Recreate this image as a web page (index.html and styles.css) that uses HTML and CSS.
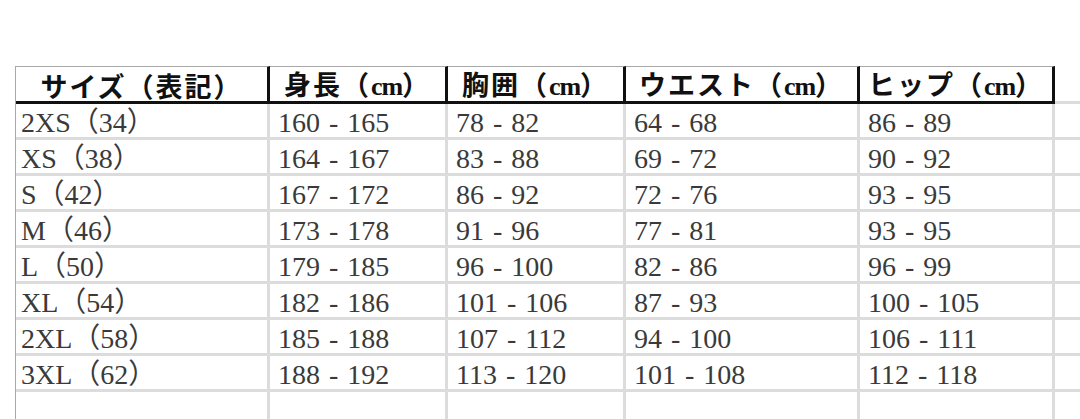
FILE: index.html
```html
<!DOCTYPE html>
<html lang="ja">
<head>
<meta charset="utf-8">
<title>サイズ表</title>
<link rel="stylesheet" href="styles.css">
</head>
<body>
<table class="sheet">
  <colgroup>
    <col class="c1"><col class="c2"><col class="c3"><col class="c4"><col class="c5"><col class="c6">
  </colgroup>
  <thead>
    <tr>
      <th>サイズ（表記）</th>
      <th>身長（<span class="unit">cm</span>）</th>
      <th>胸囲（<span class="unit">cm</span>）</th>
      <th>ウエスト（<span class="unit">cm</span>）</th>
      <th>ヒップ（<span class="unit">cm</span>）</th>
      <th class="blank"></th>
    </tr>
  </thead>
  <tbody>
    <tr><td>2XS（34）</td><td>160 - 165</td><td>78 - 82</td><td>64 - 68</td><td>86 - 89</td><td></td></tr>
    <tr><td>XS（38）</td><td>164 - 167</td><td>83 - 88</td><td>69 - 72</td><td>90 - 92</td><td></td></tr>
    <tr><td>S（42）</td><td>167 - 172</td><td>86 - 92</td><td>72 - 76</td><td>93 - 95</td><td></td></tr>
    <tr><td>M（46）</td><td>173 - 178</td><td>91 - 96</td><td>77 - 81</td><td>93 - 95</td><td></td></tr>
    <tr><td>L（50）</td><td>179 - 185</td><td>96 - 100</td><td>82 - 86</td><td>96 - 99</td><td></td></tr>
    <tr><td>XL（54）</td><td>182 - 186</td><td>101 - 106</td><td>87 - 93</td><td>100 - 105</td><td></td></tr>
    <tr><td>2XL（58）</td><td>185 - 188</td><td>107 - 112</td><td>94 - 100</td><td>106 - 111</td><td></td></tr>
    <tr><td>3XL（62）</td><td>188 - 192</td><td>113 - 120</td><td>101 - 108</td><td>112 - 118</td><td></td></tr>
    <tr class="empty"><td></td><td></td><td></td><td></td><td></td><td></td></tr>
  </tbody>
</table>
</body>
</html>
```

FILE: styles.css
```css
html, body {
  margin: 0;
  padding: 0;
  background: #ffffff;
  overflow: hidden;
}

body {
  padding: 66px 0 0 15px;
  width: 1200px;
}

.sheet {
  border-collapse: separate;
  border-spacing: 0;
  table-layout: fixed;
  width: 1084px;
  border-left: 1px solid #a8a8a8;
  font-family: "Liberation Serif", "Noto Sans CJK JP", serif;
}

.c1 { width: 254px; }
.c2 { width: 178px; }
.c3 { width: 178px; }
.c4 { width: 234px; }
.c5 { width: 195px; }
.c6 { width: 45px; }

.sheet th {
  box-sizing: border-box;
  height: 35px;
  padding: 2px 0 0 0;
  border-top: 1px solid #a8a8a8;
  border-right: 3px solid #111111;
  border-bottom: 3px solid #111111;
  font-family: "Noto Sans CJK JP", sans-serif;
  font-weight: 700;
  font-size: 27px;
  line-height: 29px;
  letter-spacing: 2px;
  color: #111111;
  text-align: center;
  white-space: nowrap;
  vertical-align: middle;
}

.sheet th.blank {
  border-top: none;
  border-right: none;
  border-bottom: 3px solid #dcdcdc;
}

.unit {
  font-family: "Liberation Serif", serif;
  font-weight: 700;
  font-size: 26px;
  letter-spacing: -1px;
}

.sheet td {
  box-sizing: border-box;
  height: 36px;
  padding: 4px 0 0 8px;
  border-right: 3px solid #dcdcdc;
  border-bottom: 3px solid #dcdcdc;
  font-size: 28px;
  line-height: 29px;
  word-spacing: 2px;
  color: #3a3a3a;
  white-space: nowrap;
  vertical-align: middle;
}

.sheet td:first-child {
  padding-left: 5px;
}

.sheet tr.empty td {
  height: 40px;
  border-bottom: none;
}
```
